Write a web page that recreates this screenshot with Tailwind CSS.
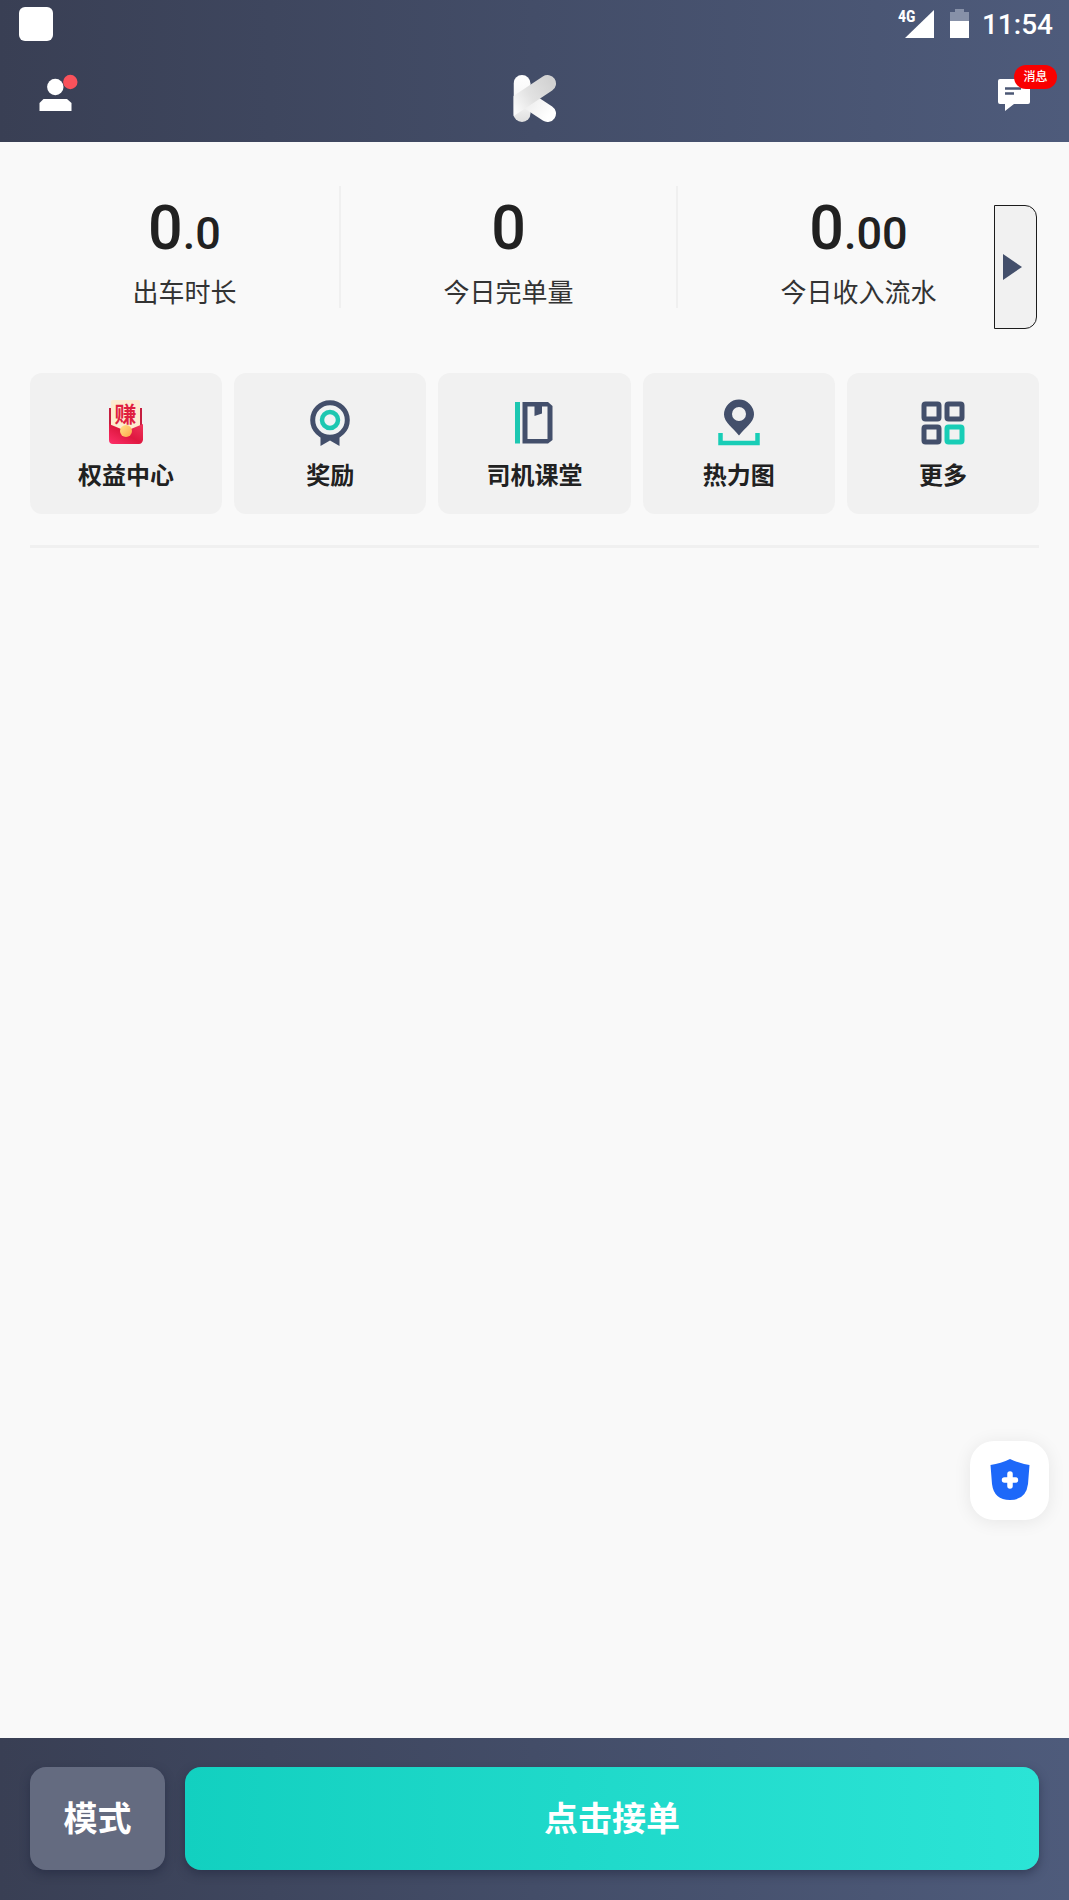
<!DOCTYPE html>
<html lang="zh-CN">
<head>
<meta charset="utf-8">
<meta name="viewport" content="width=device-width, initial-scale=1">
<title>司机端</title>
<script src="https://cdn.jsdelivr.net/npm/@tailwindcss/browser@4"></script>
</head>
<body class="flex min-h-screen flex-col bg-[#f9f9f9] font-['Roboto','Noto_Sans_CJK_SC',sans-serif] text-[#212121]">

<header class="bg-linear-to-r from-[#393f54] via-[#434d68] to-[#4e5b7b] text-white">
  <div class="flex h-12 items-start justify-between pr-4 pl-[19px]">
    <div class="mt-[7px] size-[34px] rounded-md bg-white"></div>
    <div class="flex items-start">
      <div class="relative mt-[10px] mr-4 h-7 w-9">
        <span class="absolute top-px left-0 font-['Roboto_Condensed','Liberation_Sans_Narrow','Roboto'] text-[16px] leading-3 font-bold">4G</span>
        <svg class="absolute right-0 bottom-0" width="29" height="28" viewBox="0 0 29 28" aria-hidden="true"><path d="M29 0V28H0Z" fill="#fff"/></svg>
      </div>
      <svg class="mt-[9px] mr-[13px]" width="19" height="29" viewBox="0 0 19 29" aria-hidden="true">
        <path d="M5 0H14V3H19V12H0V3H5Z" fill="#8791a8"/><path d="M0 12H19V29H0Z" fill="#fff"/>
      </svg>
      <time class="mt-1 text-[28px] leading-[42px] font-medium">11:54</time>
    </div>
  </div>
  <nav class="grid h-[94px] grid-cols-3 items-center pr-3 pl-[38px]">
    <button type="button" aria-label="个人中心" class="justify-self-start">
      <svg width="42" height="42" viewBox="0 0 42 42">
        <circle cx="17.300" cy="13" r="8.200" fill="#fff"/>
        <path d="M1.500 37V29L5.500 25H29L33.500 29V37Z" fill="#fff"/>
        <circle cx="32.300" cy="8" r="7.200" fill="#f9525b"/>
      </svg>
    </button>
    <div class="-translate-x-3 justify-self-center pt-2">
      <svg width="44" height="50" viewBox="0 0 44 50" role="img" aria-label="K">
        <defs>
          <linearGradient id="arm" gradientUnits="userSpaceOnUse" x1="0" y1="33" x2="38" y2="8"><stop offset="0" stop-color="#fafafa"/><stop offset=".45" stop-color="#e2e2e2"/><stop offset="1" stop-color="#d2d2d2"/></linearGradient>
          <linearGradient id="stem" gradientUnits="userSpaceOnUse" x1="0" y1="0" x2="0" y2="49"><stop offset="0" stop-color="#fff"/><stop offset=".6" stop-color="#f4f4f4"/><stop offset="1" stop-color="#dedede"/></linearGradient>
          <linearGradient id="leg" gradientUnits="userSpaceOnUse" x1="14" y1="26" x2="36" y2="42"><stop offset="0" stop-color="#ededed"/><stop offset="1" stop-color="#fff"/></linearGradient>
          <clipPath id="mark"><path d="M.5 0H44V49H.5Z"/></clipPath>
        </defs>
        <g fill="none" stroke-width="17" stroke-linecap="round" clip-path="url(#mark)">
          <path d="M9 9.500V39.500" stroke="url(#stem)"/>
          <path d="M14 26L34.500 39.500" stroke="url(#leg)"/>
          <path d="M-4 35L34.500 9.500" stroke="url(#arm)"/>
        </g>
      </svg>
    </div>
    <button type="button" aria-label="消息" class="relative h-[50px] w-[61px] -translate-y-2 justify-self-end">
      <svg width="61" height="50" viewBox="0 0 61 50" aria-hidden="true">
        <path d="M4 17H32Q34 17 34 19V40Q34 42 32 42H18L9 49V42H4Q2 42 2 40V19Q2 17 4 17Z" fill="#fff"/>
        <path d="M9 26.500H25M9 31.500H18" stroke="#4c5875" stroke-width="2.400"/>
      </svg>
      <span class="absolute top-[3px] right-0 flex h-6 w-[43px] items-center justify-center rounded-full bg-[#f90000] text-[12px] leading-6 font-medium">消息</span>
    </button>
  </nav>
</header>

<main class="relative flex-1 px-[30px]">
  <section class="relative mt-11 text-center">
    <div class="flex h-[122px] divide-x-2 divide-[#f0f0f0]">
      <div class="flex flex-auto flex-col pt-[6px]">
        <p class="text-[45px] leading-[72px] font-medium"><span class="text-[61px]">0</span>.0</p>
        <p class="mt-1 text-[26px] leading-[38px] text-[#333]">出车时长</p>
      </div>
      <div class="flex flex-auto flex-col pt-[6px]">
        <p class="text-[45px] leading-[72px] font-medium"><span class="text-[61px]">0</span></p>
        <p class="mt-1 text-[26px] leading-[38px] text-[#333]">今日完单量</p>
      </div>
      <div class="flex flex-auto flex-col pt-[6px]">
        <p class="text-[45px] leading-[72px] font-medium"><span class="text-[61px]">0</span>.00</p>
        <p class="mt-1 text-[26px] leading-[38px] text-[#333]">今日收入流水</p>
      </div>
    </div>
    <button type="button" aria-label="展开" class="absolute top-[19px] right-[2px] flex h-[124px] w-[43px] items-center rounded-r-xl border border-[#1c1c1c] bg-[#f1f1f1] pl-2">
      <svg width="19" height="26" viewBox="0 0 19 26"><path d="M0 0L19 13L0 26Z" fill="#434f6b"/></svg>
    </button>
  </section>

  <section class="mt-[65px] grid grid-cols-5 gap-3 text-[24px] leading-9 font-bold">
    <button type="button" class="flex h-[141px] flex-col items-center rounded-xl bg-[#f1f1f1] pt-[25px]">
      <svg width="50" height="50" viewBox="0 0 50 50" aria-hidden="true">
        <defs>
          <linearGradient id="env" x1="0" y1="1" x2="1" y2="0"><stop offset="0" stop-color="#ff2f6a"/><stop offset=".5" stop-color="#df1840"/><stop offset="1" stop-color="#f0365c"/></linearGradient>
          <linearGradient id="coin" x1="0" y1="0" x2="1" y2="1"><stop offset="0" stop-color="#ffe58a"/><stop offset="1" stop-color="#ffa548"/></linearGradient>
        </defs>
        <path d="M8 10H41V30H8Z" fill="#c51e40"/>
        <path d="M10 4Q10 2 12 2H37Q39 2 39 4V34H10Z" fill="#fdebcf"/>
        <text x="24.500" y="24" text-anchor="middle" font-size="22" font-weight="700" fill="#e0203f">赚</text>
        <path d="M8 26L25 33L42 26V42Q41 46 38 46H12Q8 46 8 42Z" fill="url(#env)"/>
        <circle cx="25" cy="33" r="6" fill="url(#coin)"/>
      </svg>
      <span class="mt-[10px]">权益中心</span>
    </button>
    <button type="button" class="flex h-[141px] flex-col items-center rounded-xl bg-[#f1f1f1] pt-[25px]">
      <svg width="50" height="50" viewBox="0 0 50 50" aria-hidden="true">
        <path d="M15.500 36H34.500V48L25 42.500L15.500 48Z" fill="#434f6b"/>
        <circle cx="25" cy="22" r="17.300" fill="#f1f3f4" stroke="#434f6b" stroke-width="5"/>
        <circle cx="25" cy="22" r="8" fill="none" stroke="#1dc7b1" stroke-width="4.500"/>
      </svg>
      <span class="mt-[10px]">奖励</span>
    </button>
    <button type="button" class="flex h-[141px] flex-col items-center rounded-xl bg-[#f1f1f1] pt-[25px]">
      <svg width="50" height="50" viewBox="0 0 50 50" aria-hidden="true">
        <path d="M6 4H11V45.500H6Z" fill="#1dc7b1"/>
        <path d="M13.500 4H39L43.500 8V42L39 45.500H13.500ZM18.500 8.500V41H38.500V8.500Z" fill="#434f6b" fill-rule="evenodd"/>
        <path d="M25.500 7H33V15.500L25.500 18Z" fill="#434f6b"/>
      </svg>
      <span class="mt-[10px]">司机课堂</span>
    </button>
    <button type="button" class="flex h-[141px] flex-col items-center rounded-xl bg-[#f1f1f1] pt-[25px]">
      <svg width="50" height="50" viewBox="0 0 50 50" aria-hidden="true">
        <path d="M25 37.500C19 30 10 24 10 16.500A15 15 0 0 1 40 16.500C40 24 31 30 25 37.500ZM25 9A7 7 0 1 0 25 23A7 7 0 1 0 25 9Z" fill="#434f6b" fill-rule="evenodd"/>
        <path d="M6.500 35V45H43.500V35" fill="none" stroke="#18cdb6" stroke-width="4.500"/>
      </svg>
      <span class="mt-[10px]">热力图</span>
    </button>
    <button type="button" class="flex h-[141px] flex-col items-center rounded-xl bg-[#f1f1f1] pt-[25px]">
      <svg width="50" height="50" viewBox="0 0 50 50" fill="none" stroke="#434f6b" stroke-width="5" aria-hidden="true">
        <rect x="6" y="6" width="15" height="15" rx="1.500"/>
        <rect x="29" y="6" width="15" height="15" rx="1.500"/>
        <rect x="6" y="29" width="15" height="15" rx="1.500"/>
        <rect x="29" y="29" width="15" height="15" rx="1.500" stroke="#18cdb6"/>
      </svg>
      <span class="mt-[10px]">更多</span>
    </button>
  </section>
  <hr class="mt-[31px] border-t-[3px] border-[#f0f0f0]">

  <button type="button" aria-label="安全中心" class="absolute right-5 bottom-[218px] flex size-[79px] items-center justify-center rounded-3xl bg-white shadow-[0_2px_18px_rgba(0,0,0,0.08)]">
    <svg width="40" height="44" viewBox="0 0 40 44"><path d="M20 0Q29 4.500 39.500 6L38 25Q36 41 20 41Q4 41 2 25L.5 6Q11 4.500 20 0Z" fill="#1d68f9"/><path d="M20 15V27M14.500 21H25.500" stroke="#fff" stroke-width="5.500" stroke-linecap="round"/></svg>
  </button>
</main>

<footer class="flex gap-5 bg-linear-to-r from-[#393f54] via-[#434d68] to-[#4e5b7b] px-[30px] pt-[29px] pb-[30px] text-[34px] font-bold text-white">
  <button type="button" class="h-[103px] w-[135px] rounded-2xl bg-[#646b80] pt-[2px] shadow-[0_4px_10px_rgba(30,36,60,0.5)]">模式</button>
  <button type="button" class="h-[103px] flex-1 rounded-2xl bg-linear-to-r from-[#12d0c0] to-[#2be4d6] pt-[2px] shadow-[0_4px_10px_rgba(30,36,60,0.5)]">点击接单</button>
</footer>
</body>
</html>
